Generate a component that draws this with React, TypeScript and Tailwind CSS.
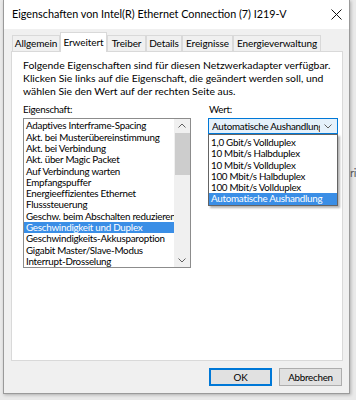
import React from "react";

const properties = [
  "Adaptives Interframe-Spacing",
  "Akt. bei Musterübereinstimmung",
  "Akt. bei Verbindung",
  "Akt. über Magic Packet",
  "Auf Verbindung warten",
  "Empfangspuffer",
  "Energieeffizientes Ethernet",
  "Flusssteuerung",
  "Geschw. beim Abschalten reduzieren",
  "Geschwindigkeit und Duplex",
  "Geschwindigkeits-Akkusparoption",
  "Gigabit Master/Slave-Modus",
  "Interrupt-Drosselung",
];

const values = [
  "1,0 Gbit/s Vollduplex",
  "10 Mbit/s Halbduplex",
  "10 Mbit/s Vollduplex",
  "100 Mbit/s Halbduplex",
  "100 Mbit/s Vollduplex",
  "Automatische Aushandlung",
];

const tabs = [
  { label: "Allgemein", w: "w-[48px]" },
  { label: "Erweitert", w: "w-[47px]", active: true },
  { label: "Treiber", w: "w-[39px]" },
  { label: "Details", w: "w-[36px]" },
  { label: "Ereignisse", w: "w-[51px]" },
  { label: "Energieverwaltung", w: "w-[88px]" },
];

function Chevron({ up }: { up?: boolean }) {
  return (
    <svg width="8" height="5" viewBox="0 0 8 5" fill="none">
      <path
        d={up ? "M0.5 4.5 L4 1 L7.5 4.5" : "M0.5 0.5 L4 4 L7.5 0.5"}
        stroke="#606060"
        strokeWidth="1"
      />
    </svg>
  );
}

export default function App() {
  return (
    <div className="relative h-[400px] w-[356px] overflow-hidden bg-[#e9e9e9] font-['Lato',sans-serif] text-[9.8px] tracking-[-0.25px] text-black">
      <div className="ml-[3px] flex h-[394px] w-[347px] flex-col border-x border-b border-[#9a9a9a] bg-[#f0f0f0] shadow-[1px_1px_3px_rgba(0,0,0,0.25)]">
        {/* title bar */}
        <div className="flex h-[29px] items-center justify-between bg-white pl-[8px] pr-[7px]">
          <span className="whitespace-nowrap text-[10.8px] tracking-normal">
            Eigenschaften von Intel(R) Ethernet Connection (7) I219-V
          </span>
          <svg width="11" height="11" viewBox="0 0 11 11">
            <path d="M0.5 0.5 L10.5 10.5 M10.5 0.5 L0.5 10.5" stroke="#111" strokeWidth="1" />
          </svg>
        </div>

        {/* tabs */}
        <div className="mt-[3px] flex h-[19px] items-end whitespace-nowrap pl-[8px] text-[10px] tracking-[-0.1px]">
          {tabs.map((t) =>
            t.active ? (
              <div
                key={t.label}
                className={`relative z-10 -mb-px flex h-[20px] ${t.w} items-start justify-center border border-b-0 border-[#d9d9d9] bg-white pt-[2px]`}
              >
                {t.label}
              </div>
            ) : (
              <div
                key={t.label}
                className={`flex h-[16px] ${t.w} items-center justify-center border border-b-0 border-[#d9d9d9] bg-[#f0f0f0]`}
              >
                {t.label}
              </div>
            )
          )}
        </div>

        {/* tab panel */}
        <div className="ml-[7px] h-[310px] w-[332px] border border-[#d9d9d9] bg-white pl-[11px] pt-[7px]">
          <p className="whitespace-nowrap text-[10.4px] leading-[13px] tracking-normal">
            Folgende Eigenschaften sind für diesen Netzwerkadapter verfügbar.
            <br />
            Klicken Sie links auf die Eigenschaft, die geändert werden soll, und
            <br />
            wählen Sie den Wert auf der rechten Seite aus.
          </p>

          <div className="mt-[5px] flex gap-[17px]">
            {/* property list */}
            <div className="flex flex-col">
              <div className="leading-[13px]">Eigenschaft:</div>
              <div className="mt-[2px] flex h-[150px] w-[168px] border border-[#8c8c8c] bg-white">
                <div className="flex-1 overflow-hidden pt-[1.4px]">
                  {properties.map((p) => (
                    <div
                      key={p}
                      className={`h-[11.3px] whitespace-nowrap pl-[2px] leading-[11.3px] ${
                        p === "Geschwindigkeit und Duplex" ? "bg-[#3a8ee6] text-white" : ""
                      }`}
                    >
                      {p}
                    </div>
                  ))}
                </div>
                <div className="flex w-[16px] flex-col items-center bg-[#f0f0f0]">
                  <div className="flex h-[13px] items-center">
                    <Chevron up />
                  </div>
                  <div className="mt-[1px] h-[42px] w-[15px] bg-[#cdcdcd]" />
                  <div className="flex-1" />
                  <div className="flex h-[13px] items-center">
                    <Chevron />
                  </div>
                </div>
              </div>
            </div>

            {/* value combo */}
            <div className="flex w-[130px] flex-col">
              <div className="pl-px leading-[13px]">Wert:</div>
              <div className="relative mt-[2px]">
                <div className="flex h-[16px] items-center border border-[#0078d7] bg-[#e5f1fb] pl-[3px] pr-[5px]">
                  <span className="flex-1 overflow-hidden whitespace-nowrap leading-[14px]">
                    Automatische Aushandlung
                  </span>
                  <span className="ml-[2px] bg-[#e5f1fb] pl-[2px]">
                    <Chevron />
                  </span>
                </div>
                <div className="absolute left-0 top-full z-20 w-[130px] border border-[#646464] bg-white pt-[2px] shadow-[2px_2px_2px_rgba(0,0,0,0.3)]">
                  {values.map((v) => (
                    <div
                      key={v}
                      className={`h-[11.3px] whitespace-nowrap pl-[2px] leading-[11.3px] ${
                        v === "Automatische Aushandlung" ? "bg-[#3a8ee6] text-white" : ""
                      }`}
                    >
                      {v}
                    </div>
                  ))}
                </div>
              </div>
            </div>
          </div>
        </div>

        {/* buttons */}
        <div className="mt-[7px] flex w-[338px] justify-end gap-[7px]">
          <button className="h-[18px] w-[63px] border border-[#0078d7] bg-[#e1e1e1] shadow-[inset_0_0_0_1px_#0078d7]">
            OK
          </button>
          <button className="h-[18px] w-[63px] border border-[#adadad] bg-[#e1e1e1]">
            Abbrechen
          </button>
        </div>
      </div>

      {/* glimpse of the window behind */}
      <span className="absolute left-[350px] top-[165px] text-[11px] text-[#555]">ri</span>
    </div>
  );
}
